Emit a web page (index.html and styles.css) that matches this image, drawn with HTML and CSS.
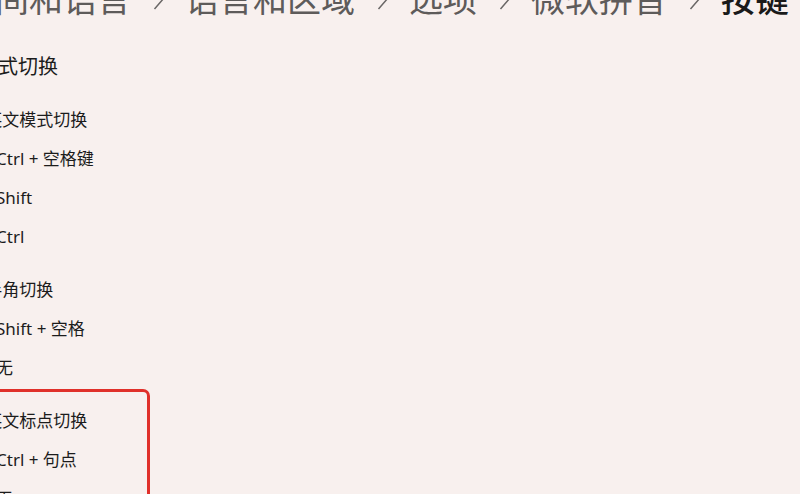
FILE: index.html
```html
<!DOCTYPE html>
<html lang="zh-CN">
<head>
<meta charset="utf-8">
<title>按键</title>
<link rel="stylesheet" href="styles.css">
</head>
<body>
<div class="page">
  <nav class="crumbs">
    <span class="crumb">时间和语言</span>
    <svg class="chev" viewBox="0 0 12 24" width="12" height="24"><path d="M1.5 1 L11 12 L1.5 23"/></svg>
    <span class="crumb">语言和区域</span>
    <svg class="chev" viewBox="0 0 12 24" width="12" height="24"><path d="M1.5 1 L11 12 L1.5 23"/></svg>
    <span class="crumb">选项</span>
    <svg class="chev" viewBox="0 0 12 24" width="12" height="24"><path d="M1.5 1 L11 12 L1.5 23"/></svg>
    <span class="crumb">微软拼音</span>
    <svg class="chev" viewBox="0 0 12 24" width="12" height="24"><path d="M1.5 1 L11 12 L1.5 23"/></svg>
    <span class="crumb current">按键</span>
  </nav>

  <h2 class="section">模式切换</h2>

  <div class="group">
    <div class="label">中/英文模式切换</div>
    <div class="option">Ctrl + 空格键</div>
    <div class="option">Shift</div>
    <div class="option">Ctrl</div>
  </div>

  <div class="group">
    <div class="label">全/半角切换</div>
    <div class="option">Shift + 空格</div>
    <div class="option">无</div>
  </div>

  <div class="group">
    <div class="label">中/英文标点切换</div>
    <div class="option">Ctrl + 句点</div>
    <div class="option">无</div>
  </div>

  <div class="highlight"></div>
</div>
</body>
</html>
```

FILE: styles.css
```css
html, body {
  margin: 0;
  padding: 0;
  background: #f8f0ee;
}

body {
  width: 800px;
  height: 494px;
  overflow: hidden;
  font-family: "Noto Sans", "Noto Sans CJK SC", sans-serif;
  color: #1c1c1c;
}

.page {
  position: relative;
  height: 494px;
  overflow: hidden;
  display: flow-root;
}

.crumbs {
  display: flex;
  align-items: center;
  margin: -25px 0 0 -39px;
  height: 46px;
  white-space: nowrap;
  font-family: "Noto Sans CJK SC", sans-serif;
  font-size: 34px;
  line-height: 46px;
}

.crumb {
  color: #5e5b5a;
}

.crumb.current {
  color: #1a1a1a;
  font-weight: 500;
}

.chev {
  flex: none;
  margin: 0 20px 0 22px;
}

.chev path {
  fill: none;
  stroke: #6a6766;
  stroke-width: 1.5;
}

.section {
  margin: 26px 0 13px -22px;
  font-size: 20px;
  font-weight: 400;
  line-height: 40px;
  height: 40px;
}

.group {
  display: flex;
  flex-direction: column;
  margin-bottom: 14px;
  font-size: 17px;
  line-height: 39px;
}

.label {
  margin-left: -38px;
}

.option {
  margin-left: -4px;
}

.highlight {
  position: absolute;
  left: -20px;
  top: 389px;
  width: 170px;
  height: 200px;
  box-sizing: border-box;
  border: 3.5px solid #e0302a;
  border-radius: 7px;
}
```
